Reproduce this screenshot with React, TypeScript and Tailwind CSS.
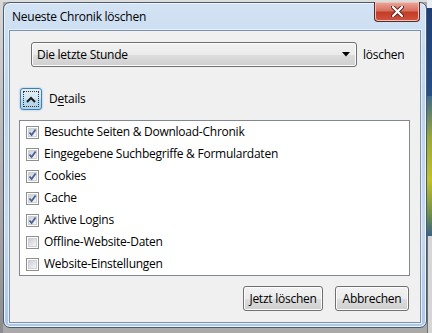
import React from "react";

const font = { fontFamily: '"Open Sans", "Noto Sans", sans-serif', letterSpacing: "-0.25px" };

// Windows 7 style checkbox
const Check = ({ checked }: { checked: boolean }) => (
  <div className="w-[13px] h-[13px] border border-[#8e8f8f] bg-white p-[1px] shrink-0">
    <div className="w-full h-full border border-[#cfd1d4] bg-[linear-gradient(135deg,#cbcfd5,#f6f6f6)] relative">
      {checked && (
        <svg width="9" height="9" viewBox="0 0 9 9" className="absolute left-[-1px] top-[-1px]">
          <path d="M1.5 4.5 L3.6 7 L7.6 1.5" fill="none" stroke="#4a5f97" strokeWidth="1.8" />
        </svg>
      )}
    </div>
  </div>
);

const items: [string, boolean][] = [
  ["Besuchte Seiten & Download-Chronik", true],
  ["Eingegebene Suchbegriffe & Formulardaten", true],
  ["Cookies", true],
  ["Cache", true],
  ["Aktive Logins", true],
  ["Offline-Website-Daten", false],
  ["Website-Einstellungen", false],
];

const btn =
  "h-[25px] border border-[#707070] rounded-[3px] bg-[linear-gradient(#f2f2f2_0%,#ebebeb_50%,#dddddd_51%,#cfcfcf_100%)] shadow-[inset_0_0_0_1px_#fcfcfc] text-[12px] text-black flex items-center justify-center";

export default function App() {
  return (
    <div
      className="w-[432px] h-[333px] overflow-hidden flex bg-[#a9a9a9] select-none"
      style={font}
    >
      <div className="w-[3px] shrink-0 bg-[linear-gradient(#d8d8d8,#8c8c8c)]" />
      <div className="w-[424px] shrink-0 flex flex-col">
        <div className="h-[2px] bg-[#dcdcdc]" />
        {/* window */}
        <div className="w-[424px] h-[326px] rounded-[7px] border border-[#4a5a70] bg-[linear-gradient(#d3e3f4,#bdd4ee_30%,#c6d9ef_70%,#acc7e8)] flex flex-col relative shadow-[inset_0_0_0_1px_#eef4fb]">
          {/* title bar */}
          <div className="h-[27px] flex items-center pl-[8px] shrink-0">
            <span className="text-[12px] text-black">Neueste Chronik löschen</span>
          </div>
          <div className="absolute right-[6px] top-[-1px] w-[46px] h-[20px] rounded-b-[4px] border border-[#5a2a2a] border-t-0 bg-[linear-gradient(#e9a99c,#d8715f_45%,#c43c27_55%,#d0553f)] flex items-center justify-center shadow-[inset_0_0_0_1px_#f2c0b4]">
            <svg width="13" height="11" viewBox="0 0 13 11">
              <path d="M2 1 L11 10 M11 1 L2 10" stroke="#5b2320" strokeWidth="4" strokeLinecap="round" />
              <path d="M2 1 L11 10 M11 1 L2 10" stroke="#ffffff" strokeWidth="2.2" strokeLinecap="round" />
            </svg>
          </div>
          {/* client area */}
          <div className="mx-[5px] mb-[4px] flex-1 border border-[#7d92ad] bg-[#f0f0f0] shadow-[0_0_0_1px_#e6eef8] flex flex-col pl-[9px] pr-[10px] pt-[11px]">
            <div className="flex items-center ml-[12px]">
              <div className={btn + " w-[326px] !justify-between px-[5px]"}>
                <span>Die letzte Stunde</span>
                <svg width="8" height="5" viewBox="0 0 8 5" className="mr-[1px]">
                  <path d="M0 0 H8 L4 4.5 Z" fill="#000" />
                </svg>
              </div>
              <span className="text-[12px] ml-[6px]">löschen</span>
            </div>
            <div className="flex items-center mt-[21px] ml-[1px]">
              <div className="w-[22px] h-[22px] rounded-[3px] border border-[#3c7fb1] bg-[linear-gradient(#e3eef6,#d4e6f2_50%,#bfdcef_51%,#aed2ea)] p-[2px] shadow-[0_0_2px_#7ab6e0]">
                <div className="w-full h-full border border-dotted border-[#333] flex items-center justify-center">
                  <svg width="10" height="7" viewBox="0 0 10 7">
                    <path d="M1 6 L5 2 L9 6" fill="none" stroke="#1a1a1a" strokeWidth="2" />
                  </svg>
                </div>
              </div>
              <span className="text-[12px] ml-[7px]">
                D<span className="underline underline-offset-2">e</span>tails
              </span>
            </div>
            <div className="mt-[10px] h-[156px] border border-[#828790] bg-white flex flex-col">
              {items.map(([label, checked]) => (
                <div key={label} className="h-[22px] flex items-center pl-[6px] gap-[5px]">
                  <Check checked={checked} />
                  <span className="text-[12px] text-black">{label}</span>
                </div>
              ))}
            </div>
            <div className="flex justify-end gap-[12px] mt-[10px] pr-[1px]">
              <div className={btn + " w-[80px]"}>Jetzt löschen</div>
              <div className={btn + " w-[74px]"}>Abbrechen</div>
            </div>
          </div>
        </div>
      </div>
      {/* desktop behind on the right */}
      <div className="flex-1 flex flex-col">
        <div className="h-[8px] bg-[#e9eef3]" />
        <div className="h-[88px] bg-[linear-gradient(#1f3f73,#274f86)]" />
        <div className="h-[140px] bg-[linear-gradient(#3f6a8a,#9aa83a_30%,#c3c12a_60%,#6d8e4a_85%,#3a6287)]" />
        <div className="flex-1 bg-[#d6d6d6] border-l border-[#707070]" />
      </div>
    </div>
  );
}
